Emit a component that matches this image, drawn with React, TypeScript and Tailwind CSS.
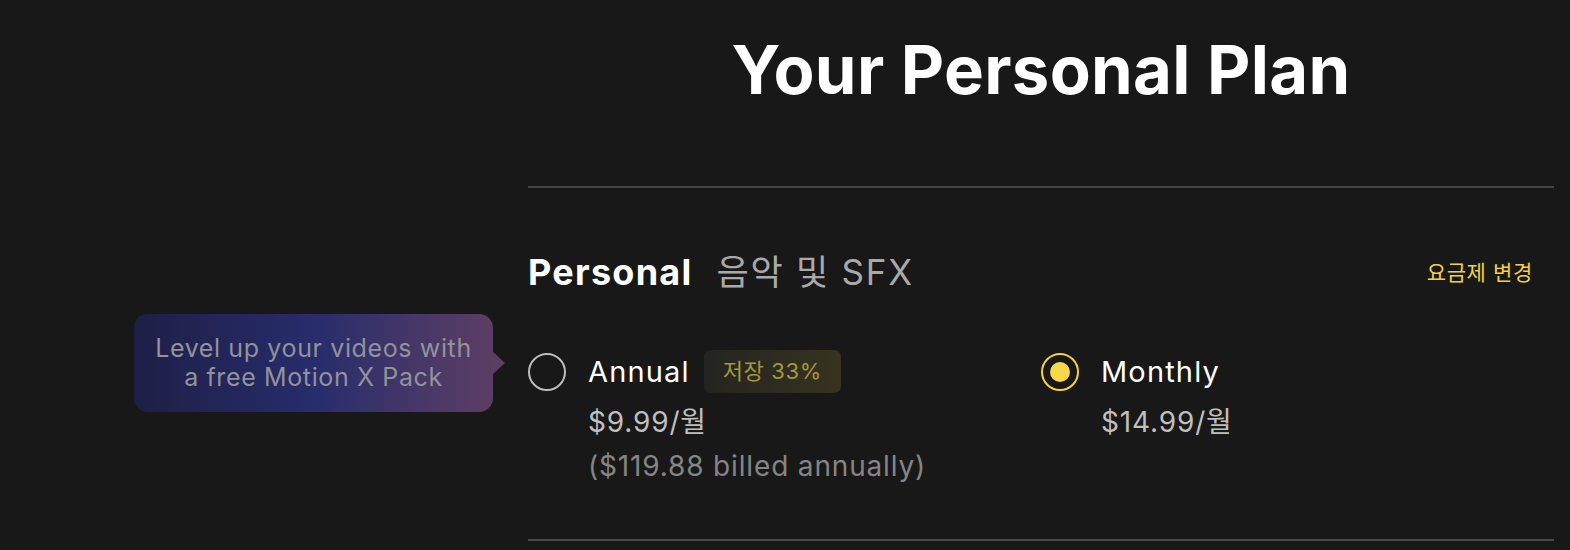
import React, { useState } from 'react';

type Plan = 'annual' | 'monthly';

function Radio({ checked }: { checked: boolean }) {
  return (
    <div
      className={`w-[38px] h-[38px] shrink-0 rounded-full border-2 flex items-center justify-center ${
        checked ? 'border-[#f3d33d]' : 'border-[#bdbdbd]'
      }`}
    >
      {checked && <div className="w-[20px] h-[20px] rounded-full bg-[#f6d84a]" />}
    </div>
  );
}

export default function App() {
  const [plan, setPlan] = useState<Plan>('monthly');

  return (
    <div className="min-h-[550px] bg-[#181818] font-['Inter','Noto_Sans_CJK_KR',sans-serif] overflow-hidden">
      <div className="ml-[528px] w-[1026px]">
        <h1 className="pt-[36px] text-center text-[67px] leading-none font-bold text-white tracking-[0.005em]">
          Your Personal Plan
        </h1>

        <div className="mt-[83px] h-[2px] bg-[#474747]" />

        {/* Plan header */}
        <div className="mt-[66px] flex items-center justify-between">
          <div className="flex items-baseline gap-[24px]">
            <span className="text-[36px] leading-none font-bold text-white tracking-[0.035em]">Personal</span>
            <span className="text-[35px] leading-none text-[#a9a9a9] tracking-[0.05em]">음악 및 SFX</span>
          </div>
          <button className="pr-[21px] text-[21px] leading-none text-[#f3d33d] tracking-[0.03em] cursor-pointer">
            요금제 변경
          </button>
        </div>

        {/* Billing options */}
        <div className="mt-[60px] grid grid-cols-2">
          <div className="relative flex gap-[22px] cursor-pointer" onClick={() => setPlan('annual')}>
            {/* Promo bubble */}
            <div className="absolute right-[calc(100%+35px)] top-[-36px] w-[359px]">
              <div className="relative rounded-[14px] bg-gradient-to-r from-[#1e1f46] via-[#272c6c] to-[#5c3d63] px-3 py-[20px] text-center text-[25px] leading-[29px] text-[#92929a] tracking-[0.025em]">
                Level up your videos with
                <br />a free Motion X Pack
                <div className="absolute right-[-12px] top-[37px] w-0 h-0 border-y-[12px] border-y-transparent border-l-[13px] border-l-[#5c3d63]" />
              </div>
            </div>

            <div className="h-[43px] flex items-center">
              <Radio checked={plan === 'annual'} />
            </div>
            <div>
              <div className="h-[43px] flex items-center gap-[14px]">
                <span className="text-[29px] leading-none text-white tracking-[0.04em]">Annual</span>
                <span className="h-[43px] px-[19px] flex items-center rounded-[7px] bg-gradient-to-r from-[#242420] to-[#37331f] text-[22px] text-[#a8953c] tracking-[0.03em]">
                  저장 33%
                </span>
              </div>
              <div className="mt-[7px] text-[28px] leading-[44px] text-[#bfbfbf] tracking-[0.03em]">$9.99/월</div>
              <div className="text-[28px] leading-[44px] text-[#858585] tracking-[0.03em]">($119.88 billed annually)</div>
            </div>
          </div>

          <div className="flex gap-[22px] cursor-pointer" onClick={() => setPlan('monthly')}>
            <div className="h-[43px] flex items-center">
              <Radio checked={plan === 'monthly'} />
            </div>
            <div>
              <div className="h-[43px] flex items-center">
                <span className="text-[29px] leading-none text-white tracking-[0.04em]">Monthly</span>
              </div>
              <div className="mt-[7px] text-[28px] leading-[44px] text-[#bfbfbf] tracking-[0.03em]">$14.99/월</div>
            </div>
          </div>
        </div>

        <div className="mt-[51px] h-[2px] bg-[#474747]" />
      </div>
    </div>
  );
}
